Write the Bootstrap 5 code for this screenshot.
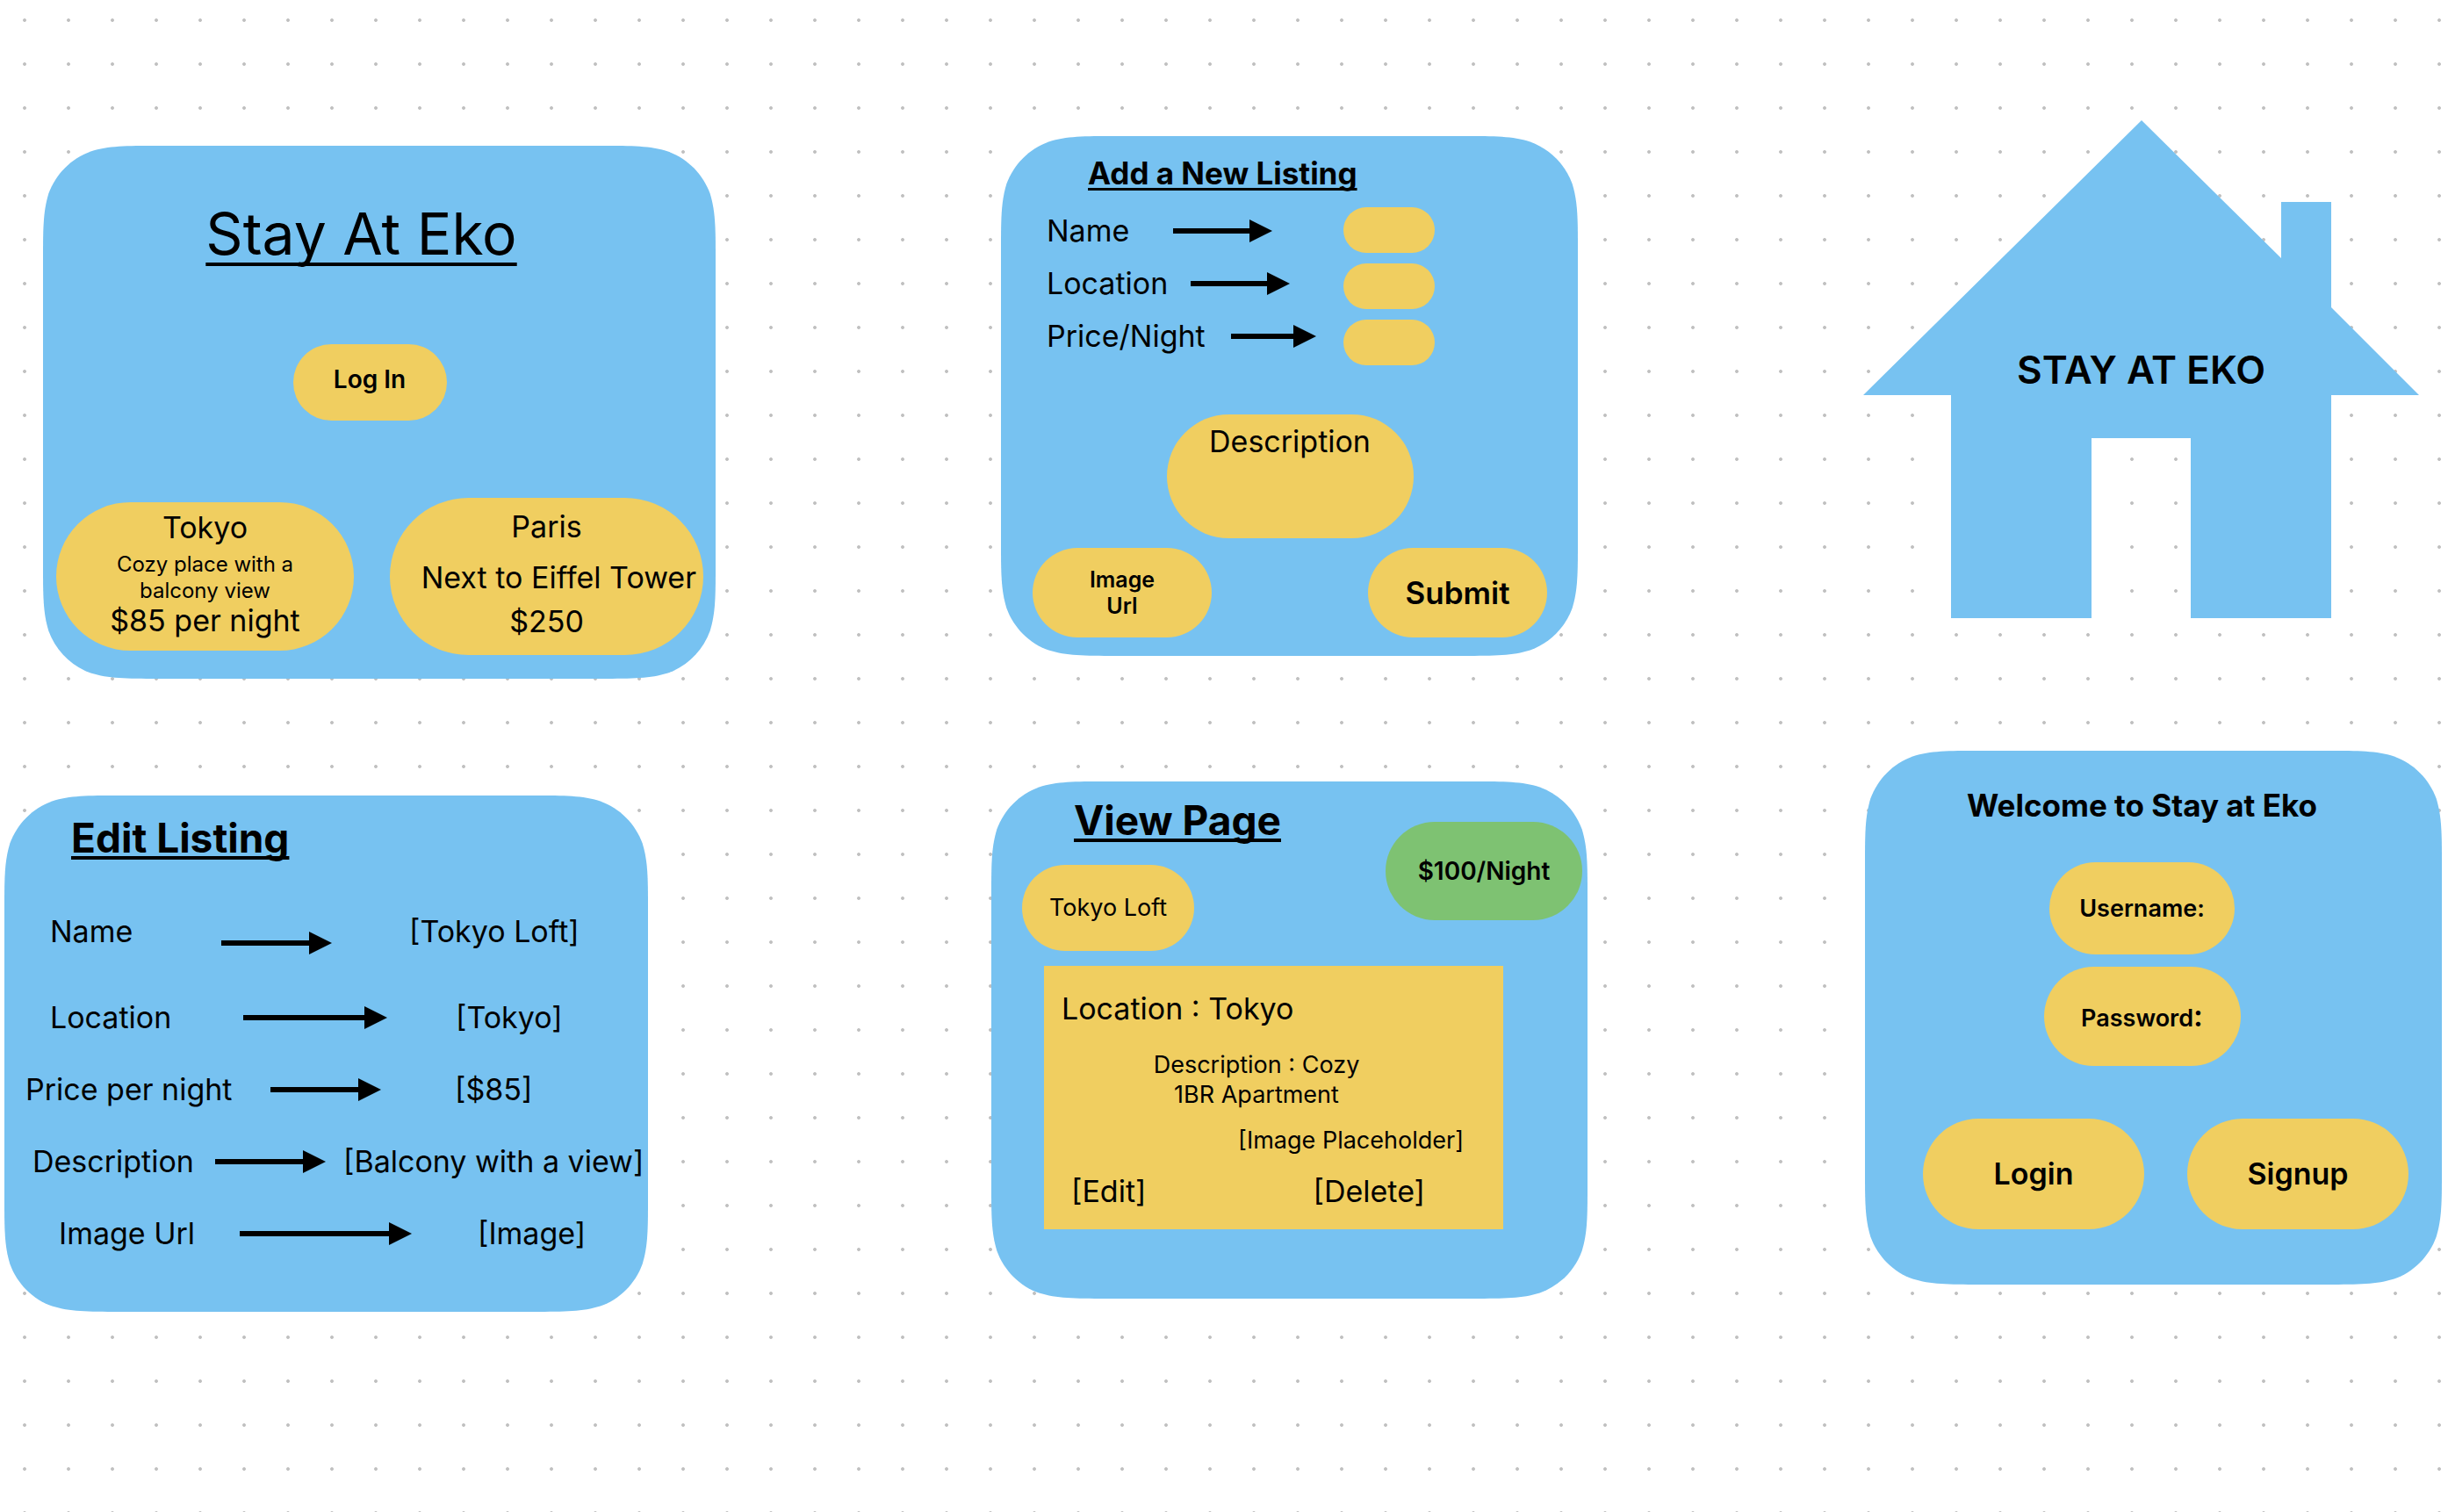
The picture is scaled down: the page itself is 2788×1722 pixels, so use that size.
<!DOCTYPE html>
<html lang="en">
<head>
<meta charset="utf-8">
<meta name="viewport" content="width=device-width, initial-scale=1">
<title>Stay At Eko wireframes</title>
<link href="https://cdn.jsdelivr.net/npm/bootstrap@5.3.0/dist/css/bootstrap.min.css" rel="stylesheet">
<style>
  :root { --sand: #f0ce60; --leaf: #7ec272; }
  body {
    font-family: Inter, "Liberation Sans", sans-serif;
    color: #000;
    background: #fff radial-gradient(circle at center, #c0c0c0 1.5px, transparent 2.3px) 3px -2px / 50px 50px;
    min-height: 100vh;
  }
  .canvas {
    display: grid;
    grid-template-columns: 810fr 679fr 659fr;
    column-gap: 314px;
    padding: 0 7px 0 5px;
  }
  .lane-a { padding-top: 166px; gap: 133px; }
  .lane-b { padding-top: 155px; gap: 143px; }
  .lane-c { padding-top: 137px; gap: 151px; }

  /* continuous-curve corners, sliced so that they keep their size */
  .board {
    width: 100%;
    border: 0 solid transparent;
    border-image: url("data:image/svg+xml,%3Csvg xmlns='http://www.w3.org/2000/svg' width='264' height='264' viewBox='0 0 264 264'%3E%3Cpath fill='%2377c2f1' d='M132 0C170 0 189 0 209.700 6.400C232 14.500 249.500 32 257.600 54.300C264 75 264 94 264 132C264 170 264 189 257.600 209.700C249.500 232 232 249.500 209.700 257.600C189 264 170 264 132 264C94 264 75 264 54.300 257.600C32 249.500 14.500 232 6.400 209.700C0 189 0 170 0 132C0 94 0 75 6.400 54.300C14.500 32 32 14.500 54.300 6.400C75 0 94 0 132 0Z'/%3E%3C/svg%3E") 131 fill / 131px;
  }
  .pill { background: var(--sand); border: 0; border-radius: 999px; color: #000; padding: 0; display: flex; flex-direction: column; align-items: center; justify-content: center; }
  .pill input, .pill textarea { position: absolute; inset: 0; width: 100%; height: 100%; border: 0; border-radius: inherit; background: transparent; resize: none; padding: 0 32px; }
  .plain { background: none; border: 0; padding: 0; color: #000; }

  .t-hero { font-size: 66px; line-height: 88px; }
  .t-head { font-size: 46px; line-height: 56px; }
  .t-sign { font-size: 44px; line-height: 56px; }
  .t-lead { font-size: 35px; line-height: 38px; }
  .t-body { font-size: 34px; line-height: 38px; }
  .t-label { font-size: 28px; line-height: 34px; }
  .t-mid { font-size: 27px; line-height: 34px; }
  .t-small { font-size: 25px; line-height: 30px; }
  .t-tiny { font-size: 24px; line-height: 30px; }
  .ruled { text-decoration: underline; text-decoration-skip-ink: none; text-decoration-thickness: 4px; text-underline-offset: 4px; }
  .t-hero.ruled { text-underline-offset: 9px; }
  .t-lead.ruled { text-decoration-thickness: 3px; }

  .arrow { display: flex; align-items: center; }
  .arrow::before { content: ""; flex: 1; height: 6px; background: #000; }
  .arrow::after { content: ""; border: 13px solid transparent; border-left: 26px solid #000; border-right: 0; }

  /* landing */
  .landing { max-width: 766px; padding: 56px 14px 27px 15px; }
  .landing .hero-line { padding-right: 42px; }
  .landing .login-line { padding: 82px 23px 88px 0; }
  .btn-login { width: 175px; height: 87px; padding-bottom: 8px; }
  .tokyo { width: 339px; padding: 10px 0 15px; }
  .tokyo .about { margin: 8px 0 0; }
  .paris { width: 357px; padding: 14px 0 19px; }
  .paris .next { margin: 20px 8px 12px 0; }

  /* add listing */
  .adding { max-width: 657px; padding: 23px 35px 21px 36px; }
  .adding .title { margin-left: 63px; }
  .fields { padding: 17px 0 0 16px; }
  .field-row { height: 60px; display: grid; align-items: center; }
  .f-name { grid-template-columns: 144px 113px; }
  .f-loc { grid-template-columns: 164px 113px; }
  .f-price { grid-template-columns: 210px 97px; }
  .slots { display: flex; flex-direction: column; gap: 12px; padding: 20px 128px 0 0; }
  .slots input { width: 104px; height: 52px; border: 0; padding: 0 16px; }
  .desc { width: 281px; height: 141px; justify-content: flex-start; padding-top: 12px; margin: 56px auto 11px; }
  .wide { width: 204px; height: 102px; }

  .house svg, .house h2 { grid-area: 1 / 1; }

  /* edit listing */
  .editing { max-width: 733px; padding: 20px 4px 48px 24px; }
  .editing .title { margin-left: 52px; }
  .editing dl { margin-top: 38px; }
  .pair { height: 82px; display: grid; align-items: center; white-space: nowrap; }
  .p-name { grid-template-columns: 195px 126px 88px auto; padding-left: 28px; margin-bottom: 16px; }
  .p-name .arrow { margin-top: 26px; }
  .p-loc { grid-template-columns: 220px 164px 78px auto; padding-left: 28px; }
  .p-price { grid-template-columns: 279px 126px 84px auto; }
  .p-desc { grid-template-columns: 208px 126px 20px auto; padding-left: 8px; }
  .p-img { grid-template-columns: 206px 196px 75px auto; padding-left: 38px; }
  .pair dd { grid-column: 4; }

  /* view page */
  .viewing { max-width: 679px; padding: 16px 6px 79px 35px; }
  .viewing .title { margin-left: 59px; }
  .loft { width: 196px; height: 98px; margin-top: 23px; }
  .price { width: 224px; height: 112px; margin-top: 30px; background: var(--leaf); }
  .sheet { background: var(--sand); width: 523px; margin: 17px 0 0 25px; padding: 30px 45px 24px 20px; }
  .sheet .about { margin: 28px 0 0; padding-right: 14px; }
  .sheet .image { margin: 18px 0 22px; }
  .sheet .actions { padding: 0 44px 0 11px; }

  /* welcome */
  .welcome { max-width: 657px; padding: 43px 38px 63px 66px; }
  .welcome .credentials { padding-right: 54px; }
  .user { width: 211px; height: 105px; margin: 46px 0 14px; }
  .pass { width: 224px; height: 113px; margin-bottom: 60px; }
  .big { width: 252px; height: 126px; }
</style>
<script src="https://cdn.jsdelivr.net/npm/bootstrap@5.3.0/dist/js/bootstrap.bundle.min.js"></script>
</head>
<body>
<main class="canvas">

  <div class="lane-a d-flex flex-column">
    <section class="board landing ms-auto">
      <div class="hero-line text-center"><h1 class="t-hero ruled fw-normal m-0">Stay At Eko</h1></div>
      <div class="login-line d-flex justify-content-center">
        <button type="button" class="pill btn-login t-label fw-semibold">Log In</button>
      </div>
      <div class="d-flex justify-content-between align-items-center">
        <article class="pill tokyo">
          <h2 class="t-body fw-normal m-0">Tokyo</h2>
          <p class="about t-tiny text-center">Cozy place with a<br>balcony view</p>
          <p class="t-body m-0">$85 per night</p>
        </article>
        <article class="pill paris">
          <h2 class="t-body fw-normal m-0">Paris</h2>
          <p class="t-body next align-self-end text-nowrap">Next to Eiffel Tower</p>
          <p class="t-body m-0">$250</p>
        </article>
      </div>
    </section>

    <section class="board editing">
      <h2 class="title t-head fw-bold ruled mb-0">Edit Listing</h2>
      <dl class="t-body mb-0">
        <div class="pair p-name"><dt class="fw-normal">Name</dt><span class="arrow"></span><dd class="m-0">[Tokyo Loft]</dd></div>
        <div class="pair p-loc"><dt class="fw-normal">Location</dt><span class="arrow"></span><dd class="m-0">[Tokyo]</dd></div>
        <div class="pair p-price"><dt class="fw-normal">Price per night</dt><span class="arrow"></span><dd class="m-0">[$85]</dd></div>
        <div class="pair p-desc"><dt class="fw-normal">Description</dt><span class="arrow"></span><dd class="m-0">[Balcony with a view]</dd></div>
        <div class="pair p-img"><dt class="fw-normal">Image Url</dt><span class="arrow"></span><dd class="m-0">[Image]</dd></div>
      </dl>
    </section>
  </div>

  <div class="lane-b d-flex flex-column">
    <form class="board adding mx-auto">
      <h2 class="title t-lead fw-bold ruled mb-0">Add a New Listing</h2>
      <div class="d-flex justify-content-between">
        <div class="fields t-body">
          <div class="field-row f-name"><label for="name">Name</label><span class="arrow"></span></div>
          <div class="field-row f-loc"><label for="location">Location</label><span class="arrow"></span></div>
          <div class="field-row f-price"><label for="rate">Price/Night</label><span class="arrow"></span></div>
        </div>
        <div class="slots">
          <input class="pill" id="name" type="text">
          <input class="pill" id="location" type="text">
          <input class="pill" id="rate" type="text">
        </div>
      </div>
      <label class="pill desc t-body position-relative">Description<textarea></textarea></label>
      <div class="d-flex justify-content-between">
        <button type="button" class="pill wide t-small fw-semibold">Image<br>Url</button>
        <button type="submit" class="pill wide t-lead fw-semibold">Submit</button>
      </div>
    </form>

    <section class="board viewing">
      <div class="d-flex justify-content-between align-items-start">
        <div>
          <h2 class="title t-head fw-bold ruled mb-0">View Page</h2>
          <div class="pill loft t-mid">Tokyo Loft</div>
        </div>
        <div class="pill price t-label fw-semibold">$100/Night</div>
      </div>
      <div class="sheet">
        <p class="t-body m-0">Location : Tokyo</p>
        <p class="about t-mid text-center">Description : Cozy<br>1BR Apartment</p>
        <p class="image t-mid text-end">[Image Placeholder]</p>
        <div class="actions d-flex justify-content-between">
          <button type="button" class="plain t-body">[Edit]</button>
          <button type="button" class="plain t-body">[Delete]</button>
        </div>
      </div>
    </section>
  </div>

  <div class="lane-c d-flex flex-column">
    <section class="house d-grid align-self-start align-items-center">
      <svg width="633" height="567" viewBox="0 0 633 567" aria-hidden="true">
        <path fill="#77c2f1" d="M317 0L476 157V93H533V213L633 313H533V567H373V362H260V567H100V313H0Z"/>
      </svg>
      <h2 class="t-sign fw-semibold text-center m-0">STAY AT EKO</h2>
    </section>

    <form class="board welcome ms-auto">
      <div class="credentials d-flex flex-column align-items-center">
        <h2 class="t-lead fw-bold m-0">Welcome to Stay at Eko</h2>
        <label class="pill user t-mid fw-semibold position-relative">Username:<input type="text"></label>
        <label class="pill pass t-mid fw-semibold position-relative"><span>Password<span class="t-body">:</span></span><input type="password"></label>
      </div>
      <div class="d-flex justify-content-between">
        <button type="submit" class="pill big t-body fw-semibold">Login</button>
        <button type="button" class="pill big t-body fw-semibold">Signup</button>
      </div>
    </form>
  </div>

</main>
</body>
</html>
